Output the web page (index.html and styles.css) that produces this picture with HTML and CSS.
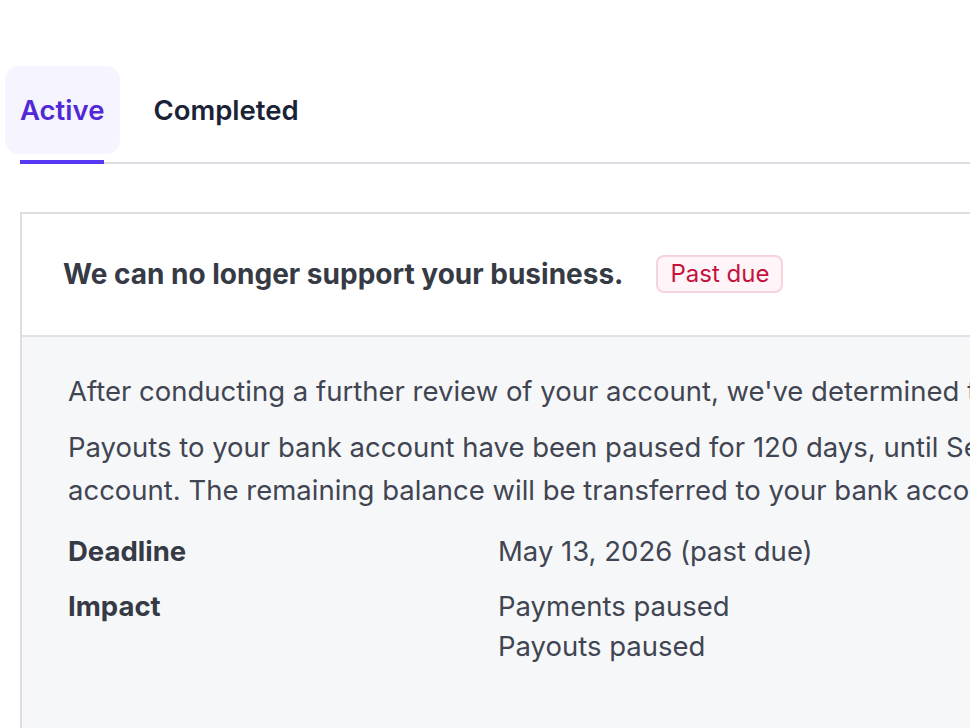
FILE: index.html
```html
<!DOCTYPE html>
<html lang="en">
<head>
<meta charset="utf-8">
<title>Requirements</title>
<link rel="stylesheet" href="styles.css">
</head>
<body>
<div class="page">
  <nav class="tabbar">
    <div class="tab tab-active">
      <span class="tab-pill">Active</span>
      <span class="tab-bar"></span>
    </div>
    <div class="tab">
      <span class="tab-pill">Completed</span>
      <span class="tab-bar"></span>
    </div>
  </nav>

  <section class="card">
    <header class="card-head">
      <h2 class="card-title">We can no longer support your business.</h2>
      <span class="badge">Past due</span>
    </header>
    <div class="card-body">
      <p class="para">After conducting a further review of your account, we've determined that we can no longer support your business.</p>
      <p class="para">Payouts to your bank account have been paused for 120 days, until September 10, 2026, to cover disputes on your<br>account. The remaining balance will be transferred to your bank account after that date.</p>
      <dl class="details">
        <div class="row">
          <dt class="label">Deadline</dt>
          <dd class="value">May 13, 2026 (past due)</dd>
        </div>
        <div class="row">
          <dt class="label">Impact</dt>
          <dd class="value">Payments paused<br>Payouts paused</dd>
        </div>
      </dl>
    </div>
  </section>
</div>
</body>
</html>
```
FILE: styles.css
```css
html, body {
  margin: 0;
  padding: 0;
  background: #ffffff;
  overflow: hidden;
}

body {
  font-family: Inter, "Liberation Sans", sans-serif;
  color: #414552;
  width: 970px;
  height: 728px;
}

.page {
  width: 2400px;
  padding-top: 66px;
}

.tabbar {
  display: flex;
  gap: 18px;
  margin-left: 20px;
  border-bottom: 2px solid #dcdce3;
}

.tab {
  display: flex;
  flex-direction: column;
  margin-bottom: -2px;
}

.tab:first-child {
  margin-left: -15px;
}

.tab-pill {
  display: flex;
  align-items: center;
  height: 88px;
  padding: 0 16px 0 15px;
  border-radius: 14px;
  font-size: 27.5px;
  font-weight: 600;
  color: #1a2236;
}

.tab-bar {
  height: 4px;
  margin: 6px 16px 0 15px;
}

.tab-active .tab-pill {
  background: #f6f4fe;
  color: #5128d6;
}

.tab-active .tab-bar {
  background: #5838f2;
}

.card {
  margin: 48px 0 0 20px;
  border: 2px solid #dedee2;
  border-bottom: none;
}

.card-head {
  display: flex;
  align-items: center;
  gap: 33px;
  padding: 41px 41px 42px 41px;
  background: #ffffff;
  border-bottom: 2px solid #e2e2e6;
}

.card-title {
  margin: 0;
  font-size: 28px;
  font-weight: 700;
  line-height: 38px;
  color: #353a44;
}

.badge {
  display: inline-flex;
  align-items: center;
  height: 34px;
  padding: 0 12px;
  border: 2px solid #f7d3de;
  border-radius: 8px;
  background: #fff5f8;
  color: #c4123f;
  font-size: 24px;
  line-height: 34px;
}

.card-body {
  background: #f6f7f9;
  padding: 33px 46px 70px;
}

.para {
  margin: 0 0 13px;
  font-size: 27.5px;
  line-height: 43px;
}

.details {
  margin: 19px 0 0;
  display: flex;
  flex-direction: column;
  gap: 15px;
}

.row {
  display: grid;
  grid-template-columns: 430px 1fr;
}

.label {
  margin: 0;
  font-size: 27.5px;
  line-height: 40px;
  font-weight: 700;
  color: #353a44;
}

.value {
  margin: 0;
  font-size: 27.5px;
  line-height: 40px;
}
```
